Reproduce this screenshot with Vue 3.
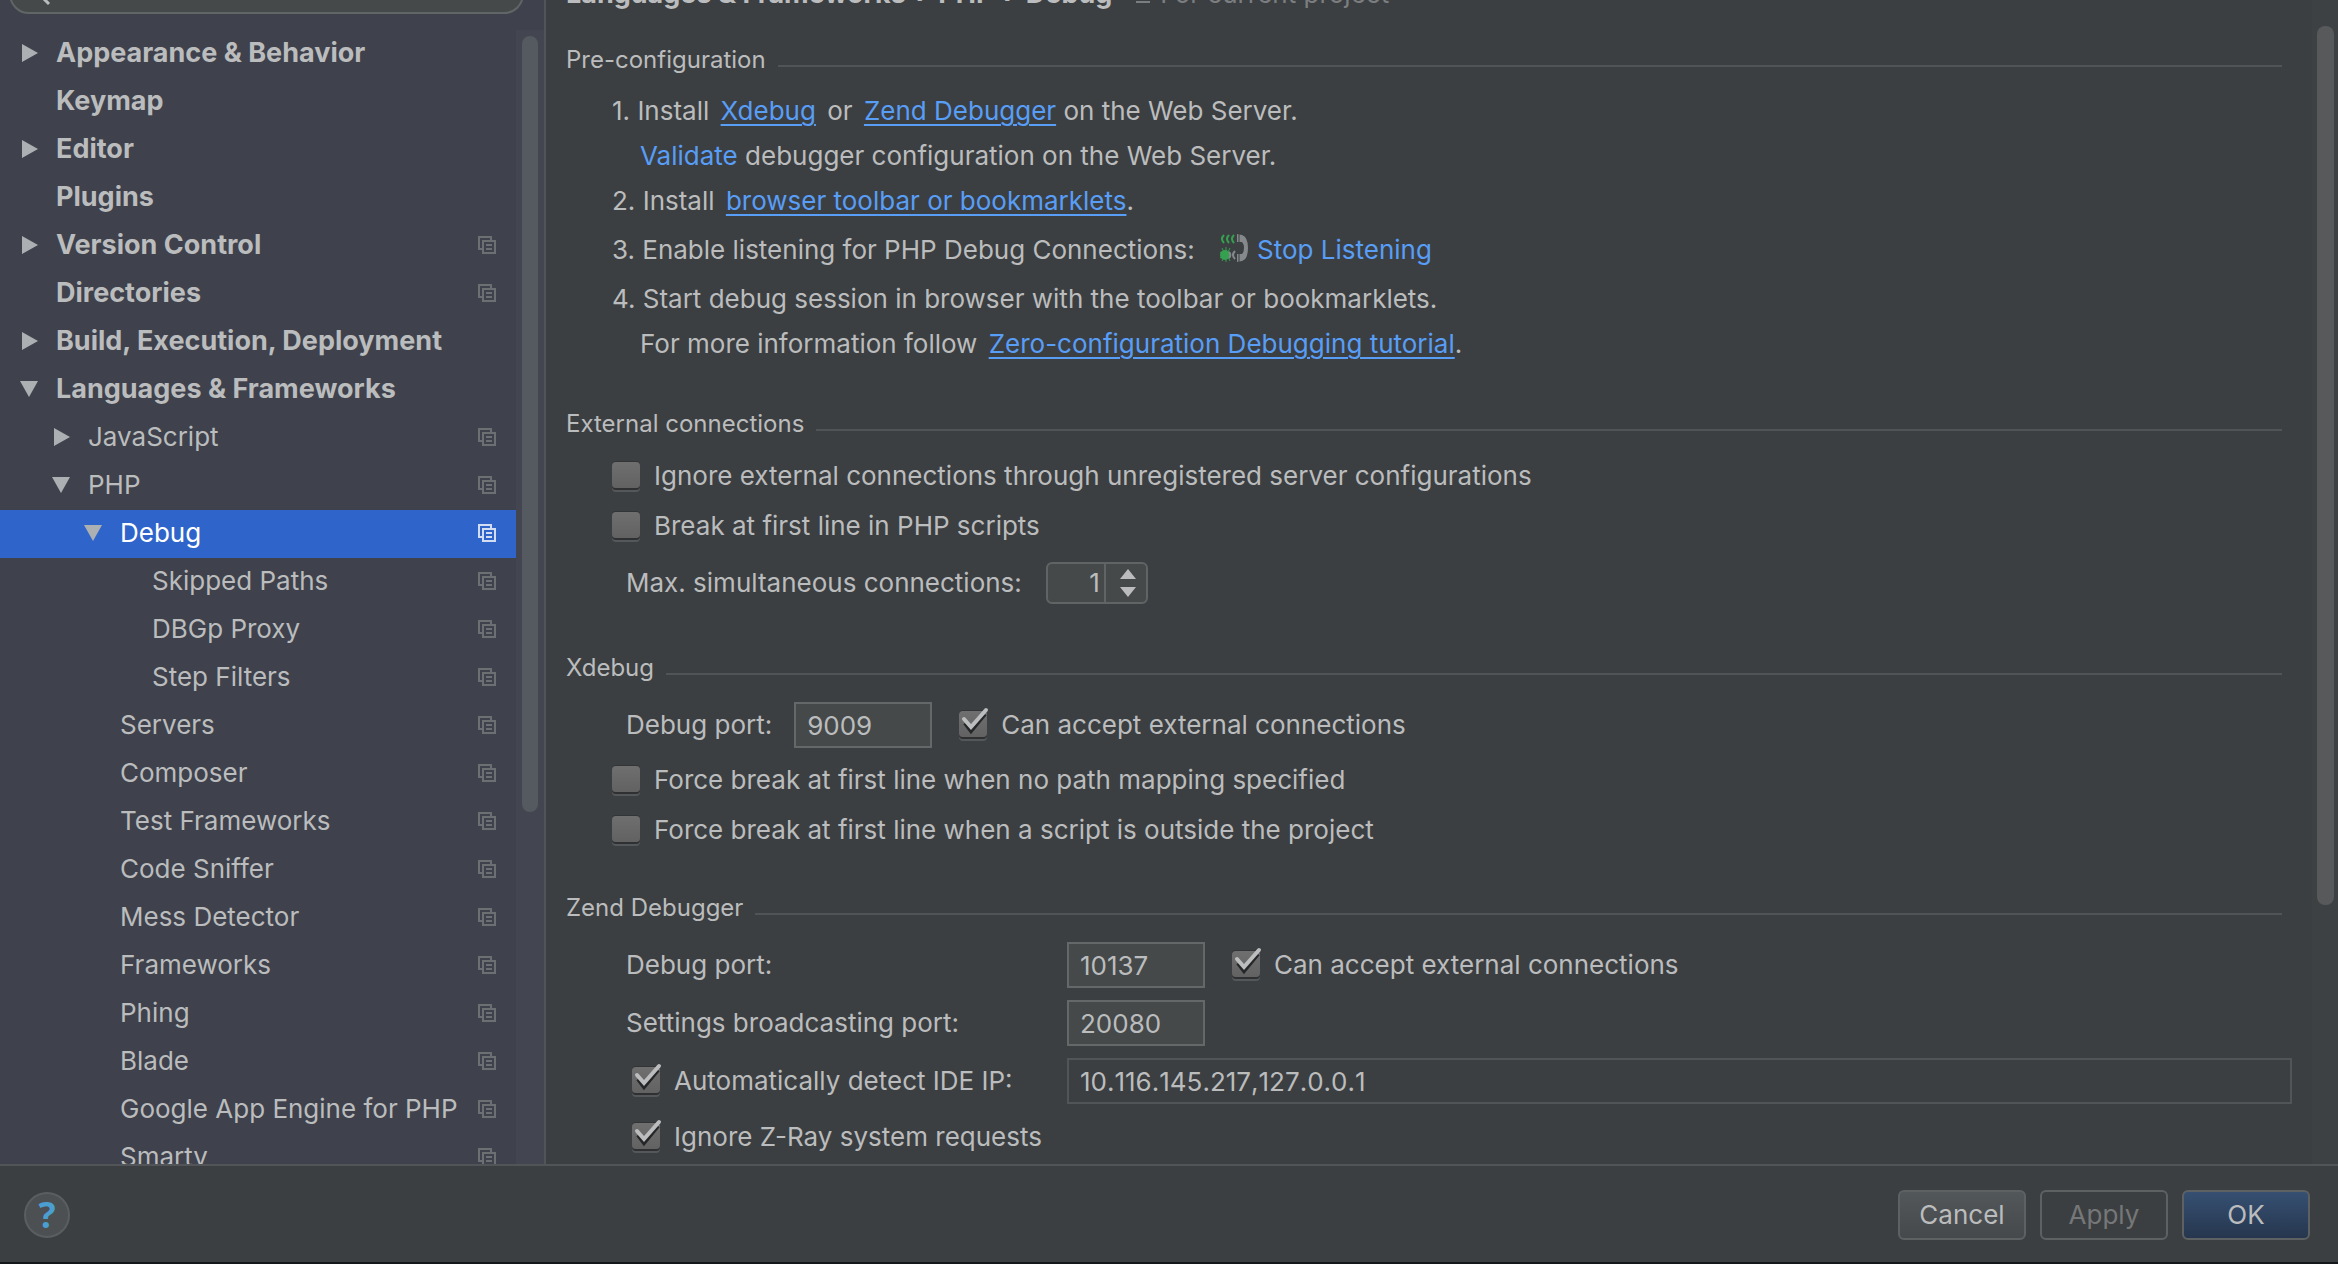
<script setup>
import { h, ref } from 'vue'

const tree = ref([
  { label: 'Appearance & Behavior', level: 0, state: 'closed', bold: true },
  { label: 'Keymap', level: 0, bold: true },
  { label: 'Editor', level: 0, state: 'closed', bold: true },
  { label: 'Plugins', level: 0, bold: true },
  { label: 'Version Control', level: 0, state: 'closed', bold: true, copy: true },
  { label: 'Directories', level: 0, bold: true, copy: true },
  { label: 'Build, Execution, Deployment', level: 0, state: 'closed', bold: true },
  { label: 'Languages & Frameworks', level: 0, state: 'open', bold: true },
  { label: 'JavaScript', level: 1, state: 'closed', copy: true },
  { label: 'PHP', level: 1, state: 'open', copy: true },
  { label: 'Debug', level: 2, state: 'open', copy: true, selected: true },
  { label: 'Skipped Paths', level: 3, copy: true },
  { label: 'DBGp Proxy', level: 3, copy: true },
  { label: 'Step Filters', level: 3, copy: true },
  { label: 'Servers', level: 2, copy: true },
  { label: 'Composer', level: 2, copy: true },
  { label: 'Test Frameworks', level: 2, copy: true },
  { label: 'Code Sniffer', level: 2, copy: true },
  { label: 'Mess Detector', level: 2, copy: true },
  { label: 'Frameworks', level: 2, copy: true },
  { label: 'Phing', level: 2, copy: true },
  { label: 'Blade', level: 2, copy: true },
  { label: 'Google App Engine for PHP', level: 2, copy: true },
  { label: 'Smarty', level: 2, copy: true }
])

const form = ref({
  ignoreExternal: false,
  breakFirst: false,
  max: '1',
  xPort: '9009',
  xAccept: true,
  forceMapping: false,
  forceOutside: false,
  zPort: '10137',
  zAccept: true,
  broadcast: '20080',
  autoIp: true,
  ip: '10.116.145.217,127.0.0.1',
  ignoreZray: true
})

// Tick mark with its shadow, drawn over a checked box
const Tick = () =>
  h('svg', { class: 'tick', width: 32, height: 32, viewBox: '0 0 32 32', fill: 'none', 'stroke-width': 4 }, [
    h('path', { d: 'M6 16L12 24L26 7', stroke: '#242628' }),
    h('path', { d: 'M5 12L12 20L27 3', stroke: '#bcbdbe', 'stroke-linecap': 'round' })
  ])
</script>

<template>
  <div class="dialog">
    <div class="body">
      <aside class="sidebar">
        <div class="search">
          <svg class="lens" width="24" height="24" viewBox="0 0 24 24"><circle cx="9" cy="9" r="7" /><path d="M14 14l8 8" /></svg>
          <input type="text" aria-label="Search settings" />
        </div>
        <div class="tree-area">
          <ul class="tree">
            <li v-for="item in tree" :key="item.label" :class="['row', 'level-' + item.level, { bold: item.bold, selected: item.selected }]">
              <span class="arrow">
                <svg v-if="item.state" width="18" height="18" viewBox="0 0 18 18">
                  <path v-if="item.state === 'closed'" d="M2 0L18 9L2 18Z" />
                  <path v-else d="M0 1H18L9 17Z" />
                </svg>
              </span>
              <span class="label">{{ item.label }}</span>
              <svg v-if="item.copy" class="copy" width="18" height="18" viewBox="0 0 18 18">
                <path d="M4 13H1V1H13V4M5 5H17V17H5ZM8 9H14M8 13H14" />
              </svg>
            </li>
          </ul>
          <div class="track"><div class="thumb"></div></div>
        </div>
      </aside>

      <main class="content">
        <div class="page">
          <header class="crumbs">
            <h1>Languages &amp; Frameworks <i>›</i> PHP <i>›</i> Debug</h1>
            <svg width="14" height="18" viewBox="0 0 14 18"><path d="M2 2H12V12H2ZM0 17H14" /></svg>
            <span>For current project</span>
          </header>

          <section>
            <h2>Pre-configuration</h2>
            <div class="steps">
              <p>1. Install <a href="#">Xdebug</a> or <a href="#">Zend Debugger</a> on the Web Server.</p>
              <p class="nested"><a href="#" class="plain">Validate</a> debugger configuration on the Web Server.</p>
              <p>2. Install <a href="#">browser toolbar or bookmarklets</a>.</p>
              <p class="listen">
                3. Enable listening for PHP Debug Connections:
                <svg class="phone" width="28" height="28" viewBox="0 0 28 28">
                  <g fill="none" stroke="#35a04f" stroke-width="2">
                    <path d="M4 1Q0 5 4 9M9 1Q5 5 9 9M14 1Q10 5 14 9" />
                    <path stroke-width="1" d="M2 14l2 4M6 13v4M10 14l-2 4M2 27l2-4M6 28v-4M10 27l-2-4M0 18l3 2M0 24l3-2" />
                  </g>
                  <circle cx="5" cy="21" r="5" fill="#35a04f" />
                  <path d="M9 18a4 4 0 0 1 0 6M15 17q-4 4 0 8" fill="none" stroke="#85898b" stroke-width="2" />
                  <path fill="#85898b" d="M17 0L22 1Q28 3 28 14Q28 25 22 27L17 28V20H22Q24 18 24 14Q24 10 22 8H17Z" />
                  <path stroke="#3c3f41" d="M19 0V9M19 19V28" />
                </svg>
                <a href="#" class="plain">Stop Listening</a>
              </p>
              <p>4. Start debug session in browser with the toolbar or bookmarklets.</p>
              <p class="nested">For more information follow <a href="#">Zero-configuration Debugging tutorial</a>.</p>
            </div>
          </section>

          <section>
            <h2>External connections</h2>
            <div class="group">
              <label class="check">
                <span class="box"><input v-model="form.ignoreExternal" type="checkbox" /><Tick v-if="form.ignoreExternal" /></span>
                Ignore external connections through unregistered server configurations
              </label>
              <label class="check">
                <span class="box"><input v-model="form.breakFirst" type="checkbox" /><Tick v-if="form.breakFirst" /></span>
                Break at first line in PHP scripts
              </label>
              <div class="line inset tall">
                <label for="max">Max. simultaneous connections:</label>
                <div class="spinner">
                  <input id="max" v-model="form.max" type="text" />
                  <span class="steppers">
                    <svg width="16" height="28" viewBox="0 0 16 28"><path d="M8 0L16 10H0ZM8 28L0 18H16Z" /></svg>
                  </span>
                </div>
              </div>
            </div>
          </section>

          <section>
            <h2>Xdebug</h2>
            <div class="group">
              <div class="line inset">
                <label for="xport">Debug port:</label>
                <input id="xport" v-model="form.xPort" class="field port" type="text" />
                <label class="check">
                  <span class="box"><input v-model="form.xAccept" type="checkbox" /><Tick v-if="form.xAccept" /></span>
                  Can accept external connections
                </label>
              </div>
              <label class="check">
                <span class="box"><input v-model="form.forceMapping" type="checkbox" /><Tick v-if="form.forceMapping" /></span>
                Force break at first line when no path mapping specified
              </label>
              <label class="check">
                <span class="box"><input v-model="form.forceOutside" type="checkbox" /><Tick v-if="form.forceOutside" /></span>
                Force break at first line when a script is outside the project
              </label>
            </div>
          </section>

          <section>
            <h2>Zend Debugger</h2>
            <div class="grid">
              <label for="zport">Debug port:</label>
              <div class="pair">
                <input id="zport" v-model="form.zPort" class="field port" type="text" />
                <label class="check">
                  <span class="box"><input v-model="form.zAccept" type="checkbox" /><Tick v-if="form.zAccept" /></span>
                  Can accept external connections
                </label>
              </div>
              <label for="broadcast">Settings broadcasting port:</label>
              <input id="broadcast" v-model="form.broadcast" class="field port" type="text" />
              <label class="check">
                <span class="box"><input v-model="form.autoIp" type="checkbox" /><Tick v-if="form.autoIp" /></span>
                Automatically detect IDE IP:
              </label>
              <input v-model="form.ip" class="field flat" type="text" aria-label="IDE IP" readonly />
              <label class="check">
                <span class="box"><input v-model="form.ignoreZray" type="checkbox" /><Tick v-if="form.ignoreZray" /></span>
                Ignore Z-Ray system requests
              </label>
            </div>
          </section>
        </div>
        <div class="track"><div class="thumb"></div></div>
      </main>
    </div>

    <footer class="footer">
      <button class="help" type="button" aria-label="Help">?</button>
      <div class="actions">
        <button type="button">Cancel</button>
        <button type="button" disabled>Apply</button>
        <button type="button" class="primary">OK</button>
      </div>
    </footer>
  </div>
</template>

<style>
body { margin: 0; background: #14171a; }
</style>

<style scoped>
* { box-sizing: border-box; }
.dialog {
  height: 100vh;
  display: flex;
  flex-direction: column;
  overflow: hidden;
  border-bottom: 2px solid #14171a;
  background: #3c3f41;
  color: #bbbcbd;
  font: 26px/32px Inter, "Liberation Sans", sans-serif;
}
input, button { font: inherit; color: inherit; }
.body { flex: 1; min-height: 0; display: flex; }
.sidebar {
  width: 546px;
  flex: none;
  display: flex;
  flex-direction: column;
  overflow: hidden;
  background: #3f424c;
  border-right: 2px solid #515559;
}
.search {
  flex: none;
  display: flex;
  height: 44px;
  margin: -30px 20px 0 9px;
  padding-left: 16px;
  border: 2px solid #606566;
  border-radius: 20px;
  background: #45494a;
}
.search input { flex: 1; min-width: 0; border: 0; background: none; outline: 0; }
.lens { margin-top: 10px; fill: none; stroke: #bbbcbd; stroke-width: 3; }
.tree-area { flex: 1; min-height: 0; display: flex; margin-top: 16px; }
.tree { flex: 1; margin: 0; padding: 0; list-style: none; }
.row { display: flex; align-items: center; height: 48px; padding: 0 20px 2px; }
.level-1 { padding-left: 52px; }
.level-2 { padding-left: 84px; }
.level-3 { padding-left: 116px; }
.bold { font-size: 27px; font-weight: 700; }
.selected { background: #2f65ca; color: #fff; }
.arrow { flex: none; width: 36px; display: flex; fill: #adb0b2; }
.label { flex: 1; white-space: nowrap; }
.copy { flex: none; fill: none; stroke: #6c7073; stroke-width: 2; }
.selected .copy { stroke: #d2ddf4; }
.track { flex: none; width: 28px; padding: 6px; background: #434651; }
.thumb { height: 776px; border-radius: 8px; background: #555960; }

.content { flex: 1; min-width: 0; display: flex; overflow: hidden; }
.content .track { width: 26px; padding: 26px 4px 0 5px; background: #3e4143; }
.content .thumb { height: 879px; background: #57595b; }
.page { flex: 1; min-width: 0; padding: 0 20px; }
.crumbs { display: flex; align-items: center; gap: 10px; height: 32px; margin: -22px 0 34px; color: #7b7e80; }
.crumbs h1 { margin: 0 14px 0 0; font-size: 27px; line-height: 32px; color: #bbbcbd; }
.crumbs i { margin: 0 4px; font-style: normal; }
.crumbs svg { fill: none; stroke: #7b7e80; stroke-width: 2; }
section { margin-bottom: 37px; }
h2 {
  display: flex;
  align-items: center;
  gap: 12px;
  margin: 0 10px 11px 0;
  font-size: 24px;
  font-weight: 400;
}
h2::after { content: ""; flex: 1; height: 2px; margin-top: 12px; background: #505456; }
.steps { padding: 1px 0 5px 46px; }
.steps p { margin: 0; line-height: 46px; white-space: nowrap; }
.steps .nested { padding-left: 28px; line-height: 44px; }
.steps .listen { line-height: 52px; }
a { margin: 0 4px; color: #589df6; text-underline-offset: 4px; text-decoration-thickness: 2px; }
a:last-child { margin-right: 0; }
.steps .plain { margin: 0; text-decoration: none; }
.phone { margin: 0 9px 0 18px; vertical-align: -3px; }
.group { padding-left: 46px; }
.line { display: flex; align-items: center; height: 60px; }
.tall { height: 64px; }
.inset { padding-left: 14px; }
.check { display: flex; align-items: center; gap: 14px; height: 50px; white-space: nowrap; }
.box { position: relative; flex: none; width: 28px; height: 28px; }
.box input {
  appearance: none;
  display: block;
  width: 28px;
  height: 26px;
  margin: 0;
  border-radius: 4px;
  background: linear-gradient(#6f6f6f, #626262);
  box-shadow: 0 2px 0 #2e3032, 0 4px 0 #55585a, 0 -1px 0 #323436;
}
.tick { position: absolute; left: 0; top: -4px; pointer-events: none; }
.field { height: 46px; padding: 0 11px; border: 2px solid #646869; background: #45494a; }
.port { width: 138px; }
.line .check, .pair .check { margin-left: 27px; }
.line .port { margin-left: 22px; }
.flat { border-color: #515557; background: none; font-kerning: none; }
.spinner { display: flex; width: 102px; height: 42px; margin-left: 24px; border: 2px solid #606465; border-radius: 6px; background: #45494a; }
.spinner input { width: 58px; padding: 0 4px; text-align: right; border: 0; border-right: 2px solid #606465; background: none; }
.steppers { flex: 1; display: flex; align-items: center; justify-content: center; padding-left: 4px; fill: #bbbcbd; }
.grid { display: grid; grid-template-columns: 441px 1fr; gap: 12px 0; align-items: center; padding: 7px 0 0 60px; }
.grid .check { height: 42px; }
.grid > .check { padding-left: 6px; }
.pair { display: flex; align-items: center; }
.footer { flex: none; height: 98px; display: flex; align-items: center; justify-content: space-between; padding: 2px 28px 0 24px; border-top: 2px solid #515557; }
.help { width: 46px; height: 46px; padding: 0; border: 2px solid #5a5e60; border-radius: 50%; background: #4c5052; color: #4a9fd0; font: 700 36px/40px "Open Sans", sans-serif; }
.actions { display: flex; gap: 14px; }
.actions button { width: 128px; height: 50px; padding: 0; border: 2px solid #5d6162; border-radius: 6px; background: linear-gradient(#525759, #46494b); }
.actions button:disabled { background: none; color: #757778; }
.actions .primary { background: linear-gradient(#365072, #26364e); }
</style>
